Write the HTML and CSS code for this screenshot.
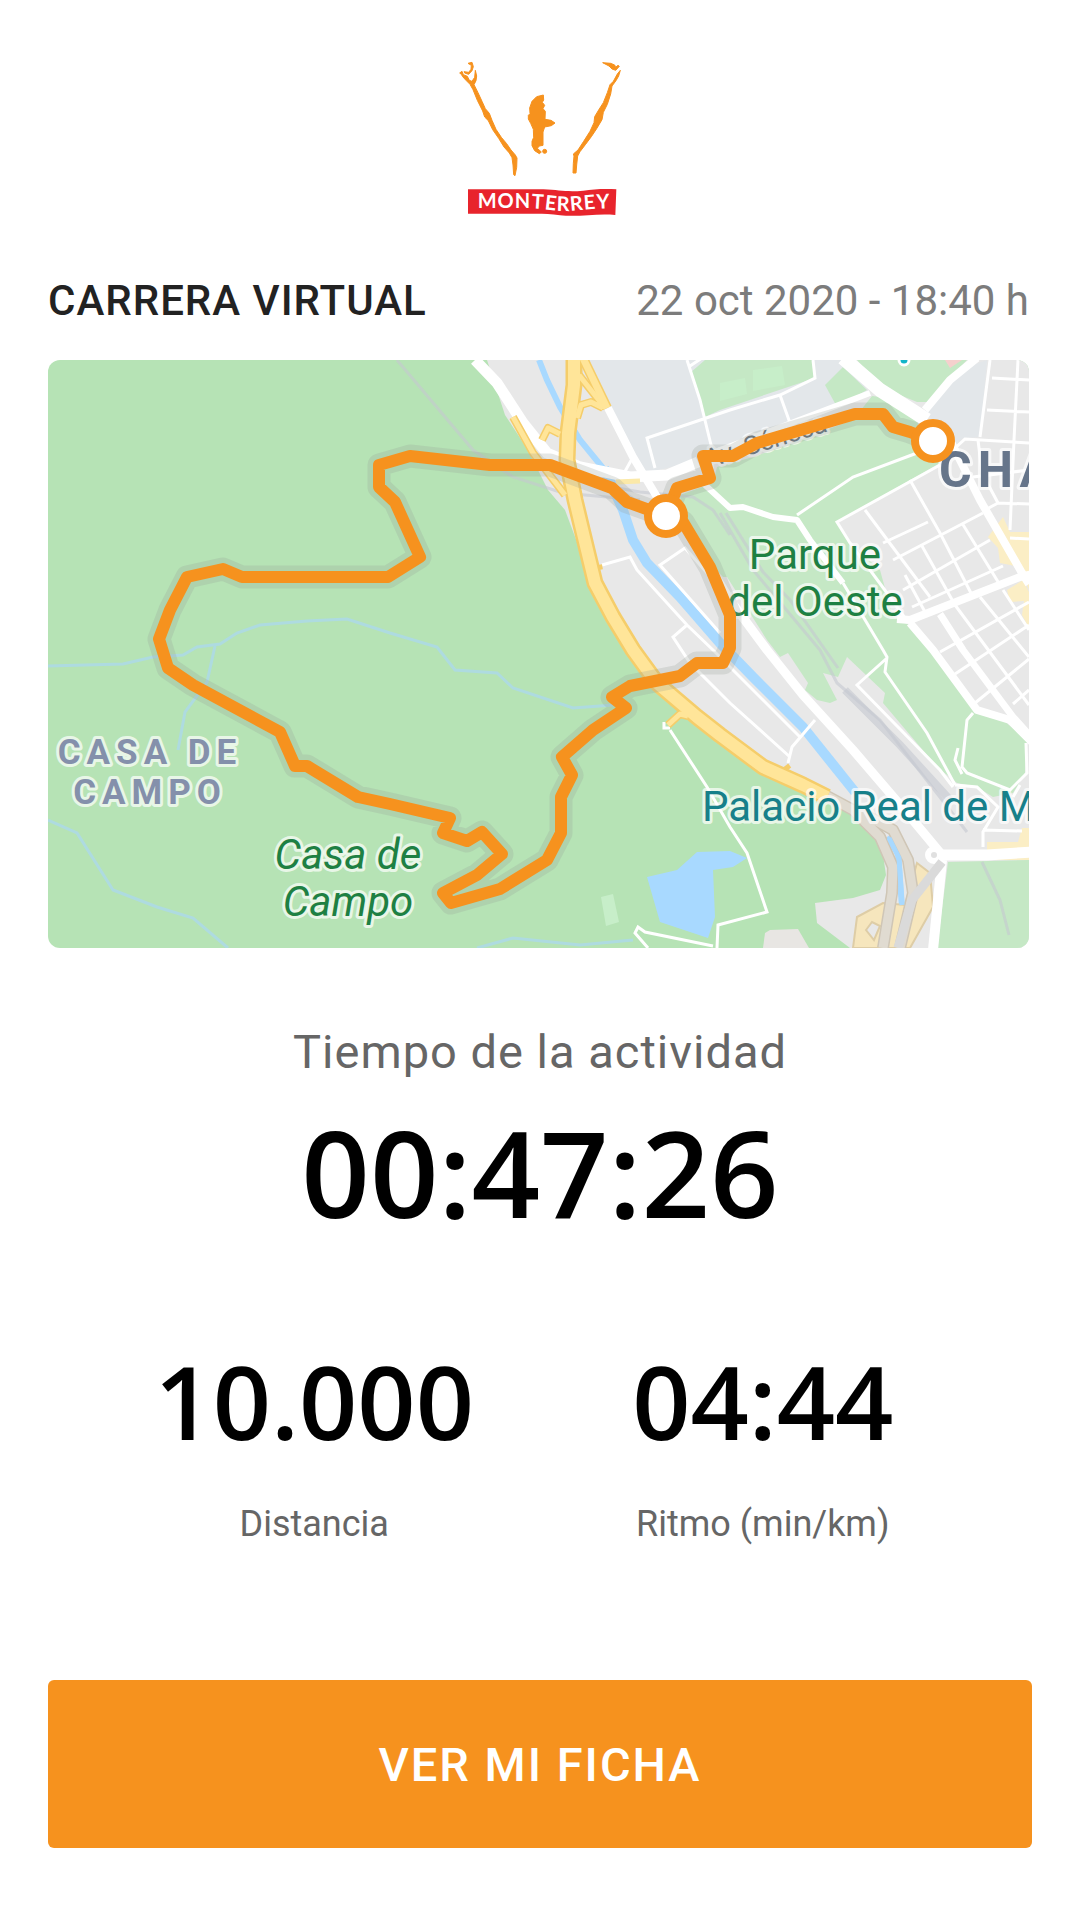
FILE: index.html
```html
<!DOCTYPE html>
<html lang="es">
<head>
    <meta charset="UTF-8">
    <meta name="viewport" content="width=device-width, initial-scale=1.0">
    <title>Carrera Virtual Monterrey</title>
    <link rel="stylesheet" href="styles.css">
</head>
<body>
    <main class="container">
        <header class="brand">
            <svg class="logo" viewBox="0 0 600 540" role="img" aria-label="Monterrey">
                <g class="logo-figure">
                    <!-- left arm -->
                    <path d="M59 69 L66 64 L70 74 L82 79 L88 91 L96 94 L104 82 L106 61 L110 78 L108 92 L102 104 L114 128 L126 154 L136 176 L148 190 L156 211 L168 238 L184 262 L200 281 L213 300 L226 315 L231 324 L230 352 L225 377 L221 374 L219 345 L216 323 L208 309 L192 291 L176 265 L158 239 L145 212 L134 201 L128 183 L112 151 L99 119 L90 103 L78 91 L68 80 L64 73 Z"/>
                    <path d="M84 40 L96 37 L100 50 L96 62 L86 73 L74 69 L72 65 L86 67 L93 58 L94 46 Z"/>
                    <!-- right arm -->
                    <path d="M541 61 L536 78 L528 92 L516 108 L512 132 L502 163 L490 187 L486 209 L470 236 L454 260 L436 284 L420 305 L413 318 L410 345 L408 369 L399 369 L400 340 L402 318 L400 312 L414 300 L431 274 L450 244 L462 218 L464 200 L476 180 L490 158 L502 128 L510 104 L520 94 L532 72 Z"/>
                    <path d="M488 38 L512 40 L524 45 L527 52 L534 46 L538 49 L527 61 L516 57 L507 48 Z"/>
                    <!-- face -->
                    <path d="M310 135 L311 150 L307 157 L314 166 L309 176 L316 184 L315 208 L333 211 L345 219 L334 227 L314 231 L309 246 L309 286 L298 288 L292 295 L304 306 L298 311 L284 302 L276 287 L276 274 L281 262 L280 238 L272 220 L265 207 L265 196 L270 191 L269 174 L276 154 L290 140 Z"/>
                    <circle cx="314" cy="304" r="6"/>
                </g>
                <path d="M84 418 H310 C360 420 380 427 430 422 C460 418 490 416 529 418 L526 495 C470 489 420 502 360 496 C335 492 310 491 290 491 H84 Z" fill="#e8242c"/>
                <path id="wave" d="M113 475 H270 C320 476 340 483 380 483 C420 483 450 474 540 474" fill="none"/>
                <text class="logo-text"><textPath href="#wave">MONTERREY</textPath></text>
            </svg>
        </header>

        <section class="activity">
            <div class="activity-header">
                <h1>CARRERA VIRTUAL</h1>
                <time datetime="2020-10-22T18:40">22 oct 2020 - 18:40 h</time>
            </div>
            <svg class="map" viewBox="48 360 981 588" role="img" aria-label="Mapa del recorrido">
                <rect x="48" y="360" width="981" height="588" fill="#b6e3b5"/>

                <!-- city ground -->
                <path class="city" d="M487 360 L505 415 L528 450 L548 490 L565 510 L580 550 L590 590 L627 645 L660 690 L700 725 L765 772 L830 800 L865 820 L882 848 L886 875 L880 890 L853 898 L815 903 L817 923 L850 948 H1029 V360 Z"/>
                <path d="M763 948 L765 933 L770 930 L798 929 L809 948 Z" fill="#e8e6e3"/>
                <path d="M582 360 H843 L870 393 L740 440 L717 455 L640 475 Z M967 367 L987 360 L980 437 L963 438 L953 447 L925 410 Z" fill="#e3e7ea"/>

                <!-- parks -->
                <g class="park">
                    <path d="M680 495 L713 483 L717 467 L753 457 L853 420 L872 396 L890 398 L917 417 L920 440 L940 463 L837 522 L850 543 L880 570 L893 617 L913 627 L937 650 L973 707 L1003 720 L1027 740 L1025 773 L1013 793 L993 797 L977 787 L957 783 L937 767 L883 703 L885 693 L847 657 L838 677 L823 673 L837 700 L830 703 L817 700 L805 690 L808 683 L788 653 L780 657 L767 640 L727 577 L723 577 L685 537 Z"/>
                    <path d="M690 373 L705 360 H812 L815 378 L720 410 L705 417 Z"/>
                    <path d="M843 367 L867 390 L837 407 L825 385 Z"/>
                    <path d="M857 360 H967 L927 402 H917 L880 387 Z"/>
                    <path d="M948 862 L1029 860 V948 H937 Z"/>
                </g>
                <path d="M720 383 L745 378 L747 394 L720 401 Z M753 370 L782 366 L785 385 L753 391 Z M601 897 L613 894 L619 922 L606 926 Z" fill="#c7eec9"/>
                <path d="M945 360 H962 L950 368 Z" fill="#f5d0cd"/>
                <path d="M1003 517 L1010 532 L1029 532 V590 L1020 567 L1000 563 L998 548 L988 537 Z M1007 590 L1023 580 L1029 592 V628 L1022 615 L1024 601 L1010 602 Z M987 842 H1018 L1022 828 H1029 V860 H987 Z" fill="#fbeec5"/>

                <!-- water -->
                <g class="stream">
                    <path d="M48 666 L123 664 L153 657 L183 655 L197 647 L220 644 L237 633 L260 625 L307 621 L347 619 L390 633 L437 647 L455 670 L497 673 L513 688 L573 708 L613 705"/>
                    <path d="M215 646 L207 682 L185 712 L178 750"/>
                    <path d="M48 820 L77 833 L113 890 L157 907 L193 918 L228 948"/>
                    <path d="M477 948 L513 938 L580 945 L633 940"/>
                </g>
                <path d="M647 877 L677 870 L697 852 L730 851 L747 858 L733 867 L713 870 L715 917 L708 938 L660 922 Z" fill="#a8d9ff"/>
                <path class="river" stroke-width="6" d="M539 360 L547 380 L560 407 L580 440 L607 473"/>
                <path class="river" stroke-width="10" d="M604 468 L623 510 L633 540 L647 563 L680 597 L720 643 L753 677 L803 727 L855 792"/>
                <path class="river" stroke-width="6" d="M887 837 L898 853 L902 907 L895 948"/>

                <!-- rail lines -->
                <g class="rail">
                    <path d="M397 360 L473 450 L513 477 L563 493 L640 500 M600 485 L640 492 L693 497 L713 510 L730 535 M602 478 L650 510"/>
                    <path d="M720 513 L753 570 L820 650 L837 683 L880 720 L967 832"/>
                    <path d="M726 513 L763 572 L790 600 L838 668"/>
                    <path d="M845 690 L900 745 L950 800" stroke-width="8"/>
                    <path d="M982 862 L1000 900 L1009 935"/>
                </g>

                <!-- tunnels and motorway -->
                <path d="M917 863 L930 873 L933 907 L910 948 H853 L857 917 L883 903 L905 905 Z" fill="#f6e6bd" stroke="#decda6" stroke-width="2"/>
                <path d="M866 930 L872 922 L880 926 L874 940 Z" fill="#e8e8e8" stroke="#decda6" stroke-width="2"/>
                <path class="tunnel-case" d="M825 795 L853 810 L880 837 L893 867 L892 893 L883 948 M853 808 L893 830 L908 860 L913 893 L900 948"/>
                <path class="tunnel" d="M825 795 L853 810 L880 837 L893 867 L892 893 L883 948 M853 808 L893 830 L908 860 L913 893 L900 948"/>
                <path class="river" stroke-width="5" d="M889 838 L899 858 L902 905"/>

                <!-- streets -->
                <g class="street">
                    <path d="M655 468 L647 438 L730 410 L780 395 L815 378 L813 360 M687 360 L700 400 L713 453 M690 366 L702 358 M780 395 L790 423 M623 475 L633 457"/>
                    <path d="M917 453 L853 477 L797 515 M940 465 L837 522 L850 543 L887 593 L905 618"/>
                    <path d="M865 510 L930 597 M910 480 L940 533 L973 597 M928 522 L883 543 M893 560 L983 513 M903 590 L990 540 M912 607 L1003 566 M922 546 L955 605 M962 523 L1000 585 M905 575 L925 612"/>
                    <path d="M990 360 L980 437 M1018 360 L1014 440 L1010 530 M992 378 L1029 380 M987 410 L1029 412 M953 450 L965 439 L1029 443 M973 477 L1029 470 M978 440 L982 473 L998 503 L985 510 M997 503 L1029 504 M1010 538 L1029 539"/>
                    <path d="M940 652 L1029 602 M955 674 L1029 625 M975 703 L1029 659 M1013 704 L1029 690 M955 605 L1029 705 M980 597 L1029 657 M1003 590 L1029 630"/>
                    <path d="M843 583 L883 650 L887 657 L885 672 L927 733 L955 785 M887 658 L857 685 L940 770 L953 787"/>
                    <path d="M973 713 L967 720 L962 767 L967 773 L1010 790 L1027 773 L1026 743 M958 748 L955 760 L962 774 M955 785 L977 787 L998 807 L983 832 L983 847 M983 830 L1022 831 M1013 797 L1020 785"/>
                    <path d="M602 565 L630 557 L637 570 L687 625 L713 650 L800 737 M722 590 L685 548 L660 565 L720 633 M687 625 L673 637 L690 663 L730 703 L790 757 M815 720 L792 747 L788 763"/>
                    <path d="M670 730 L707 787 L730 827 L747 853 L767 912 L718 925 L717 948 M648 948 L635 933 L638 927 L645 932 L713 946 M664 722 V728 H670"/>
                </g>
                <g class="road">
                    <path d="M475 360 L497 383 L523 423 L547 453 L580 467 L630 477 L667 475 L698 462" stroke-width="11"/>
                    <path d="M608 408 L633 457 L657 497" stroke-width="8"/>
                    <path d="M704 484 L730 508 L743 507 L773 517 L797 520 L810 540 L843 583" stroke-width="6"/>
                    <path d="M715 452 L870 393" stroke-width="6"/>
                    <path d="M843 358 L880 390 L927 420" stroke-width="14"/>
                    <path d="M977 358 L950 380 L925 410" stroke-width="8"/>
                    <path d="M950 440 L980 500 L1022 573 L1029 584" stroke-width="8"/>
                    <path d="M897 619 L910 620 L1020 577 L1032 574" stroke-width="8"/>
                    <path d="M910 623 L933 650 L977 710 L1010 720 L1032 742" stroke-width="8"/>
                    <path d="M940 614 L963 650 L1013 717 L1032 738" stroke-width="7"/>
                    <path d="M675 510 L730 600 L767 650 L803 695 L853 750 L907 813 L942 855" stroke-width="9"/>
                    <path d="M933 855 L987 855 L1032 852" stroke-width="11"/>
                    <path d="M942 860 L933 950" stroke-width="10"/>
                </g>
                <circle cx="934" cy="855" r="6" fill="#e0e0e0" stroke="#fff" stroke-width="6"/>
                <path d="M942 862 L912 900 L898 948" fill="none" stroke="#dadada" stroke-width="9"/>

                <path class="highway-case" stroke-width="8" d="M542 440 L548 428 L560 434 M577 418 L581 405 L591 402 L603 408 M579 375 L605 408 M513 417 L533 453 L565 495 M668 725 L680 714 L688 716 M788 770 L785 766 M599 570 L598 565"/>
                <path class="highway-case" stroke-width="10" d="M582 356 L607 408"/>
                <path class="highway-case" stroke-width="17" d="M574 356 L574 385 L568 433 L567 460 L575 500 L587 550 L595 583 L613 617 L633 650 L657 683 L697 717 L720 735 L763 767 L803 785 L827 797"/>
                <path class="highway" stroke-width="5" d="M542 440 L548 428 L560 434 M577 418 L581 405 L591 402 L603 408 M579 375 L605 408 M513 417 L533 453 L565 495 M668 725 L680 714 L688 716"/>
                <path class="highway" stroke-width="7" d="M582 356 L607 408"/>
                <path class="highway" stroke-width="12" d="M574 356 L574 385 L568 433 L567 460 L575 500 L587 550 L595 583 L613 617 L633 650 L657 683 L697 717 L720 735 L763 767 L803 785 L827 797"/>
                <path d="M616 482 L640 481" stroke="#fbe9a8" stroke-width="5"/>
                <circle cx="904" cy="360" r="5" fill="#12b5c9" stroke="#fff" stroke-width="3"/>

                <!-- labels -->
                <g class="labels">
                    <text class="label-street" transform="translate(708 468) rotate(-17)">Av. Séneca</text>
                    <g class="label-district">
                        <text x="150" y="764">CASA DE</text>
                        <text x="150" y="804">CAMPO</text>
                    </g>
                    <g class="label-park label-italic">
                        <text x="348" y="869">Casa de</text>
                        <text x="348" y="916">Campo</text>
                    </g>
                    <g class="label-park">
                        <text x="815" y="569">Parque</text>
                        <text x="815" y="616">del Oeste</text>
                    </g>
                    <text class="label-place" x="702" y="821">Palacio Real de M</text>
                    <text class="label-area" x="939" y="487">CHA</text>
                </g>

                <!-- route -->
                <path class="route-shadow" d="M933 441 L910 432 L893 427 L883 414 L855 414 L757 443 L733 456 L703 456 L710 478 L677 488 L666 516 L627 502 L612 488 L550 465 L490 465 L410 456 L379 465 L379 487 L395 502 L420 557 L388 577 L242 577 L223 569 L187 577 L170 610 L159 639 L168 668 L193 685 L280 732 L295 766 L307 766 L358 797 L390 804 L450 818 L443 833 L467 841 L482 832 L502 854 L477 875 L443 893 L451 903 L500 889 L547 860 L561 833 L561 797 L572 775 L562 757 L593 730 L626 708 L612 697 L630 686 L680 676 L697 663 L723 663 L730 648 L730 615 L710 567 L683 522 L666 516"/>
                <path class="route" d="M933 441 L910 432 L893 427 L883 414 L855 414 L757 443 L733 456 L703 456 L710 478 L677 488 L666 516 L627 502 L612 488 L550 465 L490 465 L410 456 L379 465 L379 487 L395 502 L420 557 L388 577 L242 577 L223 569 L187 577 L170 610 L159 639 L168 668 L193 685 L280 732 L295 766 L307 766 L358 797 L390 804 L450 818 L443 833 L467 841 L482 832 L502 854 L477 875 L443 893 L451 903 L500 889 L547 860 L561 833 L561 797 L572 775 L562 757 L593 730 L626 708 L612 697 L630 686 L680 676 L697 663 L723 663 L730 648 L730 615 L710 567 L683 522 L666 516"/>
                <circle class="marker" cx="933" cy="441" r="18"/>
                <circle class="marker" cx="666" cy="516" r="18"/>
            </svg>
        </section>

        <section class="time">
            <h2>Tiempo de la actividad</h2>
            <p class="time-value">00:47:26</p>
        </section>

        <dl class="stats">
            <div class="stat">
                <dt>Distancia</dt>
                <dd>10.000</dd>
            </div>
            <div class="stat">
                <dt>Ritmo (min/km)</dt>
                <dd>04:44</dd>
            </div>
        </dl>

        <button type="button" class="btn">VER MI FICHA</button>
    </main>
</body>
</html>
```
FILE: styles.css
```css
:root {
    --primary-color: #f6921e;
    --title-color: #222222;
    --text-color: #666666;
    --date-color: #7c7c7c;
}

* {
    box-sizing: border-box;
}

body {
    font-family: Roboto, "Liberation Sans", sans-serif;
    margin: 0;
    background: #ffffff;
    color: var(--text-color);
}

.container {
    padding: 50px 48px 72px;
}

.brand {
    display: flex;
    justify-content: center;
}

.logo {
    width: 200px;
    height: 180px;
}

.logo-figure {
    fill: var(--primary-color);
    stroke: var(--primary-color);
    stroke-width: 3px;
}

.logo-text {
    font-family: Lato, sans-serif;
    font-size: 60px;
    font-weight: 700;
    letter-spacing: 3px;
    fill: #ffffff;
}

.activity {
    margin-top: 46px;
    padding-right: 3px;
}

.activity-header {
    display: flex;
    justify-content: space-between;
    align-items: center;
    margin-bottom: 34px;
    font-size: 42px;
    line-height: 50px;
}

h1 {
    margin: 0;
    font-size: 42px;
    font-weight: 500;
    letter-spacing: 1px;
    color: var(--title-color);
}

time {
    color: var(--date-color);
}

/* Map */
.map {
    display: block;
    width: 100%;
    border-radius: 12px;
}

.city {
    fill: #e8e8e8;
}

.park {
    fill: #c5e8c5;
}

.stream {
    fill: none;
    stroke: #aedbe0;
    stroke-width: 3px;
}

.river {
    fill: none;
    stroke: #a8d9ff;
}

.rail {
    fill: none;
    stroke: #c4c8d0;
    stroke-opacity: 0.6;
    stroke-width: 3px;
}

.street {
    fill: none;
    stroke: #ffffff;
    stroke-width: 3px;
}

.road {
    fill: none;
    stroke: #ffffff;
    stroke-linejoin: round;
}

.tunnel-case,
.tunnel,
.highway-case,
.highway {
    fill: none;
    stroke-linejoin: round;
}

.tunnel-case {
    stroke: #cfc6b6;
    stroke-width: 12px;
}

.tunnel {
    stroke: #e0dbd1;
    stroke-width: 9px;
}

.highway-case {
    stroke: #f5cd6a;
}

.highway {
    stroke: #ffe599;
}

.labels text {
    paint-order: stroke;
    stroke: rgba(255, 255, 255, 0.7);
    stroke-width: 6px;
    stroke-linejoin: round;
}

.label-street {
    font-size: 26px;
    fill: #5f6a75;
}

.label-district {
    font-size: 35px;
    font-weight: 700;
    letter-spacing: 6px;
    text-anchor: middle;
    fill: #8490ab;
}

.label-park {
    font-size: 42px;
    text-anchor: middle;
    fill: #1e8043;
}

.label-italic {
    font-style: italic;
}

.label-place {
    font-size: 42px;
    fill: #17808a;
}

.label-area {
    font-size: 50px;
    font-weight: 700;
    letter-spacing: 6px;
    fill: #66758a;
}

.route,
.route-shadow {
    fill: none;
    stroke-linejoin: round;
}

.route {
    stroke: var(--primary-color);
    stroke-width: 12px;
}

.route-shadow {
    stroke: rgba(150, 160, 150, 0.25);
    stroke-width: 23px;
}

.marker {
    fill: #ffffff;
    stroke: var(--primary-color);
    stroke-width: 8px;
}

/* Results */
.time {
    margin-top: 76px;
    text-align: center;
}

h2 {
    margin: 0;
    font-size: 47px;
    font-weight: 400;
    line-height: 56px;
    letter-spacing: 1px;
}

.time-value {
    margin: 32px 0 0;
    font-family: "Open Sans", "Noto Sans", sans-serif;
    font-size: 120px;
    font-weight: 600;
    line-height: 120px;
    color: #000000;
}

.stats {
    display: grid;
    grid-template-columns: 1fr 1fr;
    max-width: 900px;
    margin: 117px auto 0;
    padding-right: 3px;
    text-align: center;
}

.stat {
    display: flex;
    flex-direction: column-reverse;
    gap: 51px;
}

.stat dt {
    font-size: 36px;
    line-height: 40px;
}

.stat dd {
    margin: 0;
    font-family: "Open Sans", "Noto Sans", sans-serif;
    font-size: 102px;
    font-weight: 600;
    line-height: 104px;
    color: #000000;
}

.btn {
    display: block;
    width: 100%;
    margin-top: 136px;
    padding: 57px 24px 55px;
    border: none;
    border-radius: 6px;
    background: var(--primary-color);
    color: #ffffff;
    font-family: inherit;
    font-size: 47px;
    font-weight: 500;
    line-height: 56px;
    letter-spacing: 2px;
    cursor: pointer;
}
```
